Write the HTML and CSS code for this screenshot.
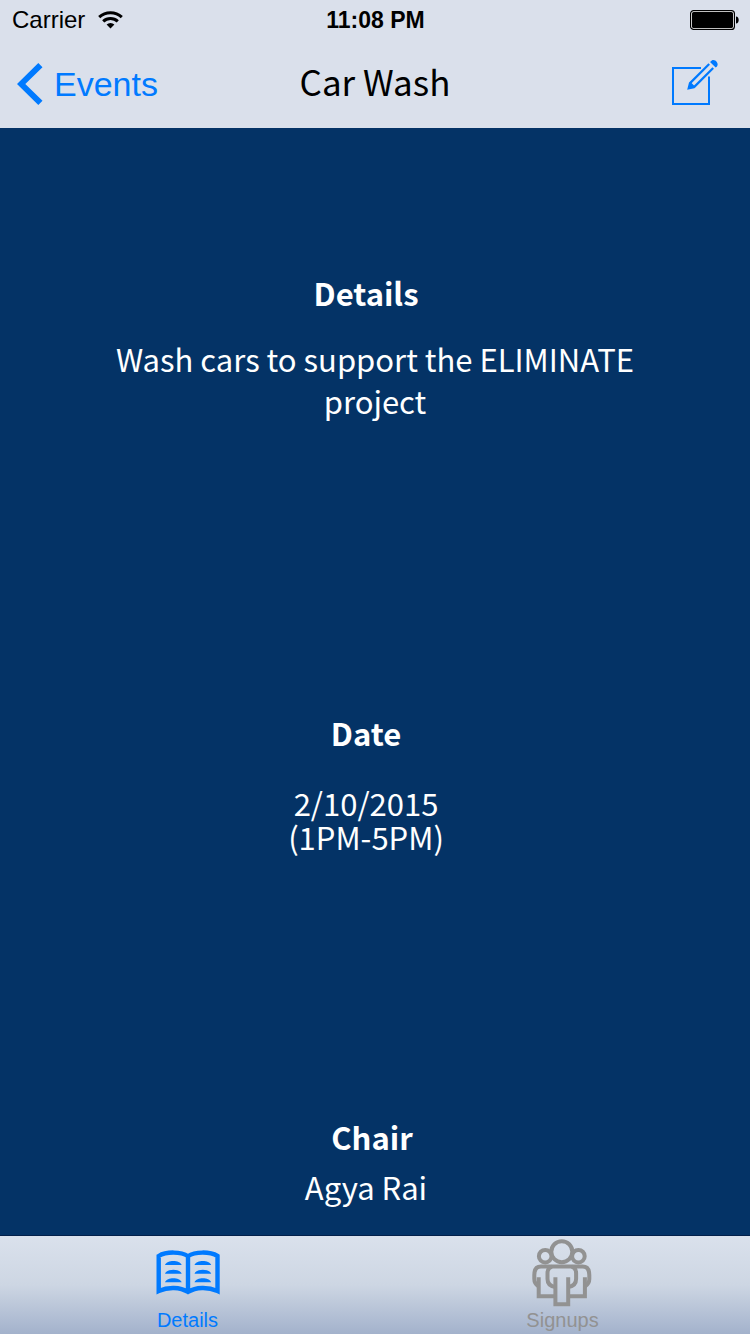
FILE: index.html
```html
<!DOCTYPE html>
<html lang="en">
<head>
<meta charset="utf-8">
<meta name="viewport" content="width=device-width, initial-scale=1">
<title>Car Wash</title>
<link rel="stylesheet" href="styles.css">
</head>
<body class="screen">
  <header class="top">
    <div class="status">
      <div class="carrier">
        <span>Carrier</span>
        <svg width="25" height="18" viewBox="0 0 25 18" aria-hidden="true">
          <g fill="none" stroke="#000" stroke-width="3">
            <path d="M1.2 6.2A16.5 16.5 0 0 1 23.8 6.2"/>
            <path d="M5.2 10.4A10.6 10.6 0 0 1 19.8 10.4"/>
          </g>
          <path d="M8.6 13.4A5.8 5.8 0 0 1 16.4 13.4L12.5 17.6Z"/>
        </svg>
      </div>
      <span class="time">11:08 PM</span>
      <svg class="battery" width="49" height="20" viewBox="0 0 49 20" aria-hidden="true">
        <rect x=".6" y=".6" width="43.8" height="18.8" rx="3" fill="#fff" stroke="#000" stroke-width="1.2"/>
        <rect x="2" y="2" width="41" height="16" rx="1.6"/>
        <path d="M46 6.5C49.6 6.5 49.6 13.5 46 13.5Z"/>
      </svg>
    </div>
    <nav class="navbar">
      <a class="back" href="#">
        <svg width="26" height="42" viewBox="0 0 26 42" aria-hidden="true">
          <path d="M21.3 0L25.5 4.2L8.3 21L25.5 37.8L21.3 42L0 21Z" fill="currentColor"/>
        </svg>
        <span>Events</span>
      </a>
      <h1 class="title">Car Wash</h1>
      <button class="edit" type="button" aria-label="Edit event">
        <svg width="50" height="54" viewBox="0 0 50 54" aria-hidden="true">
          <path d="M31 11H3V47H39V19.5" fill="none" stroke="currentColor" stroke-width="2"/>
          <path d="M19.8 26.4L39.2 7M23.8 30.4L43.2 11" fill="none" stroke="currentColor" stroke-width="2.2"/>
          <path d="M17.2 32.8L19 25.6L21 25.4L24.8 29.2L24.4 31.2ZM41 4.2C43.5 .6 49.7 5.6 47 9.4L45.7 10.4L40 4.9Z" fill="currentColor"/>
        </svg>
      </button>
    </nav>
  </header>

  <main class="event">
    <section class="group group-details">
      <h2 class="heading">Details</h2>
      <p class="description">Wash cars to support the ELIMINATE project</p>
    </section>
    <section class="group group-date">
      <h2 class="heading">Date</h2>
      <p class="value">2/10/2015<br>(1PM-5PM)</p>
    </section>
    <section class="group group-chair">
      <h2 class="heading">Chair</h2>
      <p class="value">Agya Rai</p>
    </section>
  </main>

  <nav class="tabs">
    <a class="tab tab-active" href="#" aria-current="page">
      <svg width="64" height="68" viewBox="0 0 64 68" aria-hidden="true">
        <path d="M2.7 52V17C10 12.4 25 12.4 32 17.2C39 12.4 54 12.4 61.5 17V52C52 47.8 40 47.8 32 53C24 47.8 12 47.8 2.7 52ZM32 17V53" fill="none" stroke="currentColor" stroke-width="4.4"/>
        <path d="M9 26C11 20.7 23.7 20.7 25.7 26ZM9 34.7C11 29.4 23.7 29.4 25.7 34.7ZM9 43.3C11 38 23.7 38 25.7 43.3ZM38.5 26C40.5 20.7 53.2 20.7 55.2 26ZM38.5 34.7C40.5 29.4 53.2 29.4 55.2 34.7ZM38.5 43.3C40.5 38 53.2 38 55.2 43.3Z" fill="currentColor"/>
      </svg>
      <span>Details</span>
    </a>
    <a class="tab" href="#">
      <svg width="64" height="68" viewBox="1 0 64 68" aria-hidden="true">
        <g fill="none" stroke="currentColor" stroke-width="4">
          <circle cx="31.8" cy="12.7" r="10.5"/>
          <circle cx="15.2" cy="17.2" r="6.3"/>
          <circle cx="48.4" cy="17.2" r="6.3"/>
          <path d="M8.7 38.3V57.2H25.4M54.9 38.3V57.2H38.2"/>
          <path d="M8.7 47.5C5.5 45.5 4.3 43.5 4.3 40V36C4.3 31 6 27.6 11 27.6H52.6C57.6 27.6 59.3 31 59.3 36V40C59.3 43.5 58.1 45.5 54.9 47.5"/>
          <path d="M22 27.6C18.5 28.5 17.5 31 17.5 34V40C17.5 45 20 47.3 25.4 48M41.6 27.6C45.1 28.5 46.1 31 46.1 34V40C46.1 45 43.6 47.3 38.2 48"/>
          <path d="M25.4 38.3V65.3H38.2V38.3"/>
        </g>
      </svg>
      <span>Signups</span>
    </a>
  </nav>
</body>
</html>
```
FILE: styles.css
```css
* {
  box-sizing: border-box;
}

.screen {
  margin: 0;
  min-height: 100vh;
  display: flex;
  flex-direction: column;
  background: #043366;
  color: #fff;
  font-family: "Noto Sans CJK JP", "Open Sans", sans-serif;
}

.top {
  background: #dae0eb;
  color: #000;
}

.status,
.navbar {
  display: grid;
  grid-template-columns: 1fr auto 1fr;
  align-items: center;
}

.status {
  height: 40px;
  padding: 0 11px 0 12px;
  font: 24px/40px "Liberation Sans", Arial, sans-serif;
}

.carrier {
  display: flex;
  align-items: center;
  gap: 13px;
}

.time {
  font-size: 23px;
  font-weight: 700;
}

.battery {
  justify-self: end;
}

.navbar {
  height: 88px;
  padding: 0 17px;
}

.back {
  display: flex;
  align-items: center;
  gap: 11px;
  color: #007aff;
  font: 34px/40px "Liberation Sans", Arial, sans-serif;
  text-decoration: none;
}

.title {
  margin: 0;
  padding-bottom: 6px;
  font-size: 35px;
  font-weight: 400;
  line-height: 44px;
}

.edit {
  justify-self: end;
  margin: 0 13px 0 0;
  padding: 0;
  border: 0;
  background: none;
  color: #007aff;
  line-height: 0;
}

.event {
  flex: 1;
  display: flex;
  flex-direction: column;
  padding-top: 145px;
  text-align: center;
}

.group {
  padding-right: 18px;
}

.group-details {
  flex: 440 1 0;
}

.group-date {
  flex: 404 1 0;
}

.group-chair {
  flex: 119 1 0;
}

.heading {
  margin: 0;
  font-size: 31px;
  font-weight: 700;
  line-height: 40px;
}

.description,
.value {
  margin: 0;
  font-size: 31px;
}

.description {
  padding: 25px 80px 0 98px;
  line-height: 42px;
}

.value {
  padding-top: 33px;
  line-height: 34px;
}

.group-chair .heading {
  padding-left: 12px;
}

.group-chair .value {
  padding-top: 13px;
}

.tabs {
  display: grid;
  grid-template-columns: 1fr 1fr;
  height: 98px;
  background: linear-gradient(#dae1ec, #cdd6e3 50%, #a3b2cc);
  box-shadow: 0 -1px #03204a;
}

.tab {
  display: flex;
  flex-direction: column;
  align-items: center;
  padding-top: 3px;
  color: #929292;
  font: 20px/26px "Liberation Sans", Arial, sans-serif;
  text-decoration: none;
}

.tab-active {
  color: #007aff;
}
```
